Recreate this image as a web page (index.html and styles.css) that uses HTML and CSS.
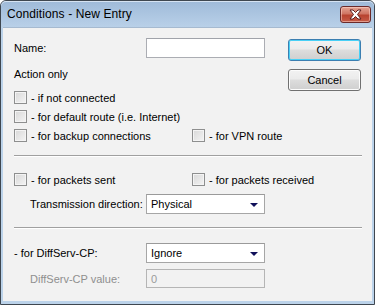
FILE: index.html
```html
<!DOCTYPE html>
<html>
<head>
<meta charset="utf-8">
<link rel="stylesheet" href="styles.css">
</head>
<body>
<div class="window">
  <div class="titlebar">
    <span class="title">Conditions - New Entry</span>
    <div class="close">
      <svg width="15" height="11" viewBox="0 0 15 11">
        <path d="M2 1 L5 1 L7.5 3.5 L10 1 L13 1 L9.5 5.5 L13 10 L10 10 L7.5 7.5 L5 10 L2 10 L5.5 5.5 Z" fill="#fff" stroke="#5a2020" stroke-width="1" stroke-linejoin="round"/>
      </svg>
    </div>
  </div>
  <div class="client">
    <div class="top">
      <div class="form">
        <div class="field-row">
          <span class="lbl">Name:</span>
          <div class="input"></div>
        </div>
        <div class="section-label">Action only</div>
        <div class="check-row first"><span class="check"><span class="cb"></span>- if not connected</span></div>
        <div class="check-row"><span class="check"><span class="cb"></span>- for default route (i.e. Internet)</span></div>
        <div class="check-row">
          <span class="check col1"><span class="cb"></span>- for backup connections</span>
          <span class="check"><span class="cb"></span>- for VPN route</span>
        </div>
      </div>
      <div class="buttons">
        <div class="btn default">OK</div>
        <div class="btn">Cancel</div>
      </div>
    </div>
    <div class="sep sep1"></div>
    <div class="check-row packets">
      <span class="check col1"><span class="cb"></span>- for packets sent</span>
      <span class="check"><span class="cb"></span>- for packets received</span>
    </div>
    <div class="field-row indent trans">
      <span class="lbl">Transmission direction:</span>
      <div class="select"><span>Physical</span><span class="arrow"></span></div>
    </div>
    <div class="sep sep2"></div>
    <div class="field-row diff">
      <span class="lbl">- for DiffServ-CP:</span>
      <div class="select"><span>Ignore</span><span class="arrow"></span></div>
    </div>
    <div class="field-row indent value">
      <span class="lbl disabled">DiffServ-CP value:</span>
      <div class="input disabled-input">0</div>
    </div>
  </div>
</div>
</body>
</html>
```

FILE: styles.css
```css
* { box-sizing: border-box; }
html, body { margin: 0; padding: 0; background: #fff; }
body {
  font-family: "Liberation Sans", Arial, sans-serif;
  font-size: 11px;
  color: #000;
}
.window {
  width: 375px;
  height: 305px;
  border: 1px solid #3f4750;
  border-radius: 6px 6px 0 0;
  background: #bcd3ea;
  padding: 0 2px 3px 2px;
  display: flex;
  flex-direction: column;
  overflow: hidden;
}
.titlebar {
  height: 26px;
  margin: 0 -2px;
  padding: 0 3px 0 6px;
  display: flex;
  align-items: center;
  justify-content: space-between;
  background: linear-gradient(#9fbad8, #a9c3df 40%, #b9d0e8);
  border-radius: 5px 5px 0 0;
  box-shadow: inset 0 1px 0 #d6e3f2;
}
.title {
  font-size: 12px;
  letter-spacing: 0.1px;
  color: #000;
  margin-top: -1px;
}
.close {
  width: 31px;
  height: 17px;
  margin-top: 1px;
  border: 1px solid #6b2a2a;
  border-radius: 3px;
  background: linear-gradient(#e5a493, #cf7563 45%, #b8432f 55%, #c65c48);
  display: flex;
  align-items: center;
  justify-content: center;
  box-shadow: inset 0 0 0 1px rgba(255,220,210,0.5);
}
.client {
  flex: 1;
  background: #f2f2f2;
  border: 1px solid #a6bad0;
  border-width: 1px 0 0 0;
  padding: 10px 10px 0 11px;
}
.top {
  display: flex;
  justify-content: space-between;
}
.form { flex: 1; }
.field-row {
  display: flex;
  align-items: center;
  height: 20px;
}
.lbl {
  width: 132px;
  flex: none;
  white-space: nowrap;
}
.indent { padding-left: 16px; }
.indent .lbl { width: 116px; }
.input {
  width: 119px;
  height: 20px;
  background: #fff;
  border: 1px solid #abadb3;
  border-top-color: #a0a3aa;
}
.section-label {
  margin-top: 8px;
  line-height: 16px;
  height: 16px;
}
.check-row {
  display: flex;
  align-items: center;
  height: 19px;
}
.check-row.first { margin-top: 6px; }
.check {
  display: flex;
  align-items: center;
  white-space: nowrap;
}
.col1 { width: 178px; }
.cb {
  width: 13px;
  height: 13px;
  border: 1px solid #8e8f8f;
  background: linear-gradient(135deg, #d8d8d8, #f4f4f4);
  box-shadow: inset 0 0 0 1px #f4f4f4;
  margin-right: 4px;
  flex: none;
}
.buttons {
  display: flex;
  flex-direction: column;
  gap: 8px;
  margin-top: 1px;
  margin-right: 1px;
}
.btn {
  width: 73px;
  height: 22px;
  border: 1px solid #707070;
  border-radius: 3px;
  background: linear-gradient(#f2f2f2, #ebebeb 45%, #dddddd 50%, #cfcfcf);
  box-shadow: inset 0 0 0 1px #fcfcfc;
  display: flex;
  align-items: center;
  justify-content: center;
}
.btn.default {
  border-color: #3c7fb1;
  box-shadow: inset 0 0 0 1px #48d0f6;
}
.sep {
  height: 1px;
  background: #a0a0a0;
  box-shadow: 0 1px 0 #fff;
}
.sep1 { margin-top: 10px; }
.packets { margin-top: 14px; }
.trans { margin-top: 5px; }
.sep2 { margin-top: 13px; }
.diff { margin-top: 15px; }
.value { margin-top: 6px; height: 19px; }
.select {
  width: 119px;
  height: 20px;
  background: #fff;
  border: 1px solid #a6a6a6;
  border-top-color: #9a9a9a;
  display: flex;
  align-items: center;
  justify-content: space-between;
  padding: 0 6px 0 4px;
}
.arrow {
  width: 0;
  height: 0;
  border-left: 4px solid transparent;
  border-right: 4px solid transparent;
  border-top: 4px solid #10105a;
  margin-top: 1px;
}
.disabled { color: #8f8f8f; }
.disabled-input {
  height: 19px;
  background: #f2f2f2;
  border-color: #b5b5b5;
  color: #9a9a9a;
  padding-left: 4px;
  display: flex;
  align-items: center;
}
```
